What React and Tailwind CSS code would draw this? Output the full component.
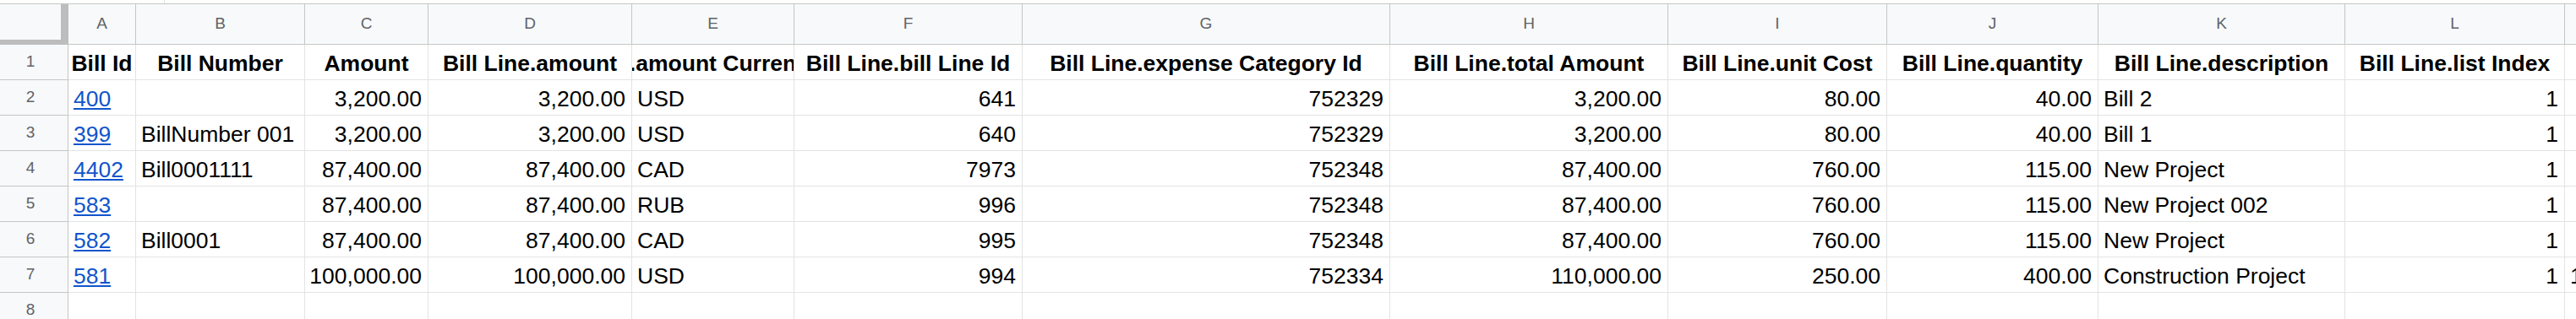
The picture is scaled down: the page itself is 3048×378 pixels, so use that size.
const GRID =
  "grid grid-cols-[81px_80px_200px_146px_241px_192px_270px_435px_329px_259px_250px_292px_260px_1fr]";

const columns = [
  { letter: "A", title: "Bill Id", align: "left", link: true },
  { letter: "B", title: "Bill Number", align: "left" },
  { letter: "C", title: "Amount", align: "right" },
  { letter: "D", title: "Bill Line.amount", align: "right" },
  { letter: "E", title: "Bill Line.amount Currency Code", align: "left" },
  { letter: "F", title: "Bill Line.bill Line Id", align: "right" },
  { letter: "G", title: "Bill Line.expense Category Id", align: "right" },
  { letter: "H", title: "Bill Line.total Amount", align: "right" },
  { letter: "I", title: "Bill Line.unit Cost", align: "right" },
  { letter: "J", title: "Bill Line.quantity", align: "right" },
  { letter: "K", title: "Bill Line.description", align: "left" },
  { letter: "L", title: "Bill Line.list Index", align: "right" },
  { letter: "", title: "", align: "left" },
];

const rows = [
  ["400", "", "3,200.00", "3,200.00", "USD", "641", "752329", "3,200.00", "80.00", "40.00", "Bill 2", "1", ""],
  ["399", "BillNumber 001", "3,200.00", "3,200.00", "USD", "640", "752329", "3,200.00", "80.00", "40.00", "Bill 1", "1", ""],
  ["4402", "Bill0001111", "87,400.00", "87,400.00", "CAD", "7973", "752348", "87,400.00", "760.00", "115.00", "New Project", "1", ""],
  ["583", "", "87,400.00", "87,400.00", "RUB", "996", "752348", "87,400.00", "760.00", "115.00", "New Project 002", "1", ""],
  ["582", "Bill0001", "87,400.00", "87,400.00", "CAD", "995", "752348", "87,400.00", "760.00", "115.00", "New Project", "1", ""],
  ["581", "", "100,000.00", "100,000.00", "USD", "994", "752334", "110,000.00", "250.00", "400.00", "Construction Project", "1", "1"],
  ["", "", "", "", "", "", "", "", "", "", "", "", ""],
];

const font = { fontFamily: "'Liberation Sans', Arial, sans-serif" };

const RowHead = ({ n }) => (
  <div className="flex items-center justify-center pr-[8px] bg-[#f8f9fa] border-r border-b border-[#c4c7c5] text-[19px] text-[#5f6368]">
    {n}
  </div>
);

const Cell = ({ value, col, last }) => {
  const right = col.align === "right";
  return (
    <div
      className={`flex items-end overflow-hidden whitespace-nowrap border-b border-[#e2e3e3] pl-[6px] pb-[4px] leading-[30px] text-[26.5px] text-black ${
        right ? "justify-end pr-[7px]" : "justify-start pr-[2px]"
      } ${last ? "" : "border-r"}`}
    >
      {col.link && value ? (
        <span className="text-[#1155cc] underline">{value}</span>
      ) : (
        <span className="shrink-0">{value}</span>
      )}
    </div>
  );
};

export default function App() {
  return (
    <div className="w-full h-[378px] overflow-hidden bg-white" style={font}>
      {/* top gap above the sheet */}
      <div className="h-[4px] flex">
        <div className="ml-[194px] w-px bg-[#e2e3e3]" />
      </div>

      {/* column letters */}
      <div className={`${GRID} h-[49px] border-t border-[#c4c7c5]`}>
        <div className="bg-[#f8f9fa] border-r-[9px] border-b-[6px] border-[#bdbdbd]" />
        {columns.map((c, i) => (
          <div
            key={i}
            className={`flex items-center justify-center bg-[#f8f9fa] border-b border-[#c4c7c5] text-[19px] text-[#5f6368] ${
              i === columns.length - 1 ? "" : "border-r"
            }`}
          >
            {c.letter}
          </div>
        ))}
      </div>

      {/* header row */}
      <div className={`${GRID} h-[42px]`}>
        <RowHead n={1} />
        {columns.map((c, i) => (
          <div
            key={i}
            className={`flex items-end justify-center overflow-hidden whitespace-nowrap border-b border-[#e2e3e3] pb-[4px] leading-[30px] text-[26.5px] font-bold text-black ${
              i === columns.length - 1 ? "" : "border-r"
            }`}
          >
            <span className="shrink-0">{c.title}</span>
          </div>
        ))}
      </div>

      {/* data rows */}
      {rows.map((r, ri) => (
        <div key={ri} className={`${GRID} h-[42px]`}>
          <RowHead n={ri + 2} />
          {r.map((v, ci) => (
            <Cell key={ci} value={v} col={columns[ci]} last={ci === r.length - 1} />
          ))}
        </div>
      ))}
    </div>
  );
}
